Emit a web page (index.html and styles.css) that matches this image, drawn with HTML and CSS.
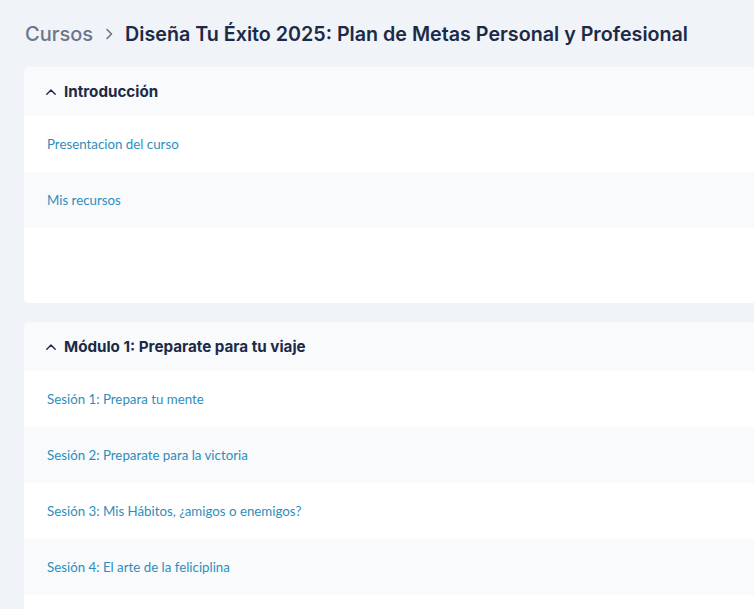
FILE: index.html
```html
<!DOCTYPE html>
<html lang="es">
<head>
    <meta charset="UTF-8">
    <meta name="viewport" content="width=device-width, initial-scale=1.0">
    <title>Diseña Tu Éxito 2025</title>
    <link rel="stylesheet" href="styles.css">
</head>
<body>
    <header class="breadcrumb">
        <span class="crumb">Cursos</span>
        <svg class="sep" width="16" height="16" viewBox="0 0 16 16"><path d="M6 3.5l4.5 4.5L6 12.5" fill="none" stroke="#6b7789" stroke-width="1.6" stroke-linecap="round" stroke-linejoin="round"/></svg>
        <h1>Diseña Tu Éxito 2025: Plan de Metas Personal y Profesional</h1>
    </header>

    <!-- Módulo: Introducción -->
    <section class="modulo">
        <div class="modulo-head">
            <svg class="caret" width="12" height="12" viewBox="0 0 12 12"><path d="M1.8 8.2L6 4l4.2 4.2" fill="none" stroke="#1b2a47" stroke-width="1.4" stroke-linecap="round" stroke-linejoin="round"/></svg>
            <h2>Introducción</h2>
        </div>
        <a class="leccion" href="#">Presentacion del curso</a>
        <a class="leccion" href="#">Mis recursos</a>
        <div class="relleno"></div>
    </section>

    <!-- Módulo 1 -->
    <section class="modulo">
        <div class="modulo-head">
            <svg class="caret" width="12" height="12" viewBox="0 0 12 12"><path d="M1.8 8.2L6 4l4.2 4.2" fill="none" stroke="#1b2a47" stroke-width="1.4" stroke-linecap="round" stroke-linejoin="round"/></svg>
            <h2>Módulo 1: Preparate para tu viaje</h2>
        </div>
        <a class="leccion" href="#">Sesión 1: Prepara tu mente</a>
        <a class="leccion" href="#">Sesión 2: Preparate para la victoria</a>
        <a class="leccion" href="#">Sesión 3: Mis Hábitos, ¿amigos o enemigos?</a>
        <a class="leccion" href="#">Sesión 4: El arte de la feliciplina</a>
        <div class="relleno"></div>
    </section>
</body>
</html>
```

FILE: styles.css
```css
body {
    margin: 0;
    padding: 0 0 0 24px;
    background-color: #f0f3f7;
    font-family: Inter, "Noto Sans", sans-serif;
    overflow: hidden;
}

.breadcrumb {
    display: flex;
    align-items: center;
    gap: 8px;
    height: 67px;
    padding-left: 1px;
}

.crumb {
    font-size: 20px;
    font-weight: 500;
    color: #6b7789;
}

.breadcrumb h1 {
    margin: 0;
    font-size: 19.7px;
    font-weight: 600;
    color: #1b2a47;
    white-space: nowrap;
}

.modulo {
    display: flex;
    flex-direction: column;
    width: 760px;
    background-color: #ffffff;
    border-radius: 5px 0 0 5px;
    overflow: hidden;
    margin-bottom: 19px;
}

.modulo-head {
    display: flex;
    align-items: center;
    gap: 7px;
    height: 49px;
    padding-left: 21px;
    background-color: #f8fafc;
}

.modulo-head h2 {
    margin: 0;
    font-size: 15.2px;
    font-weight: 700;
    color: #1b2a47;
}

.leccion {
    display: flex;
    align-items: center;
    height: 56px;
    padding-left: 23px;
    font-family: Lato, "Open Sans", sans-serif;
    font-size: 13.3px;
    color: #2f8dbb;
    text-decoration: none;
}

.leccion:nth-of-type(even) {
    background-color: #f8fafc;
}

.relleno {
    height: 75px;
}
```
